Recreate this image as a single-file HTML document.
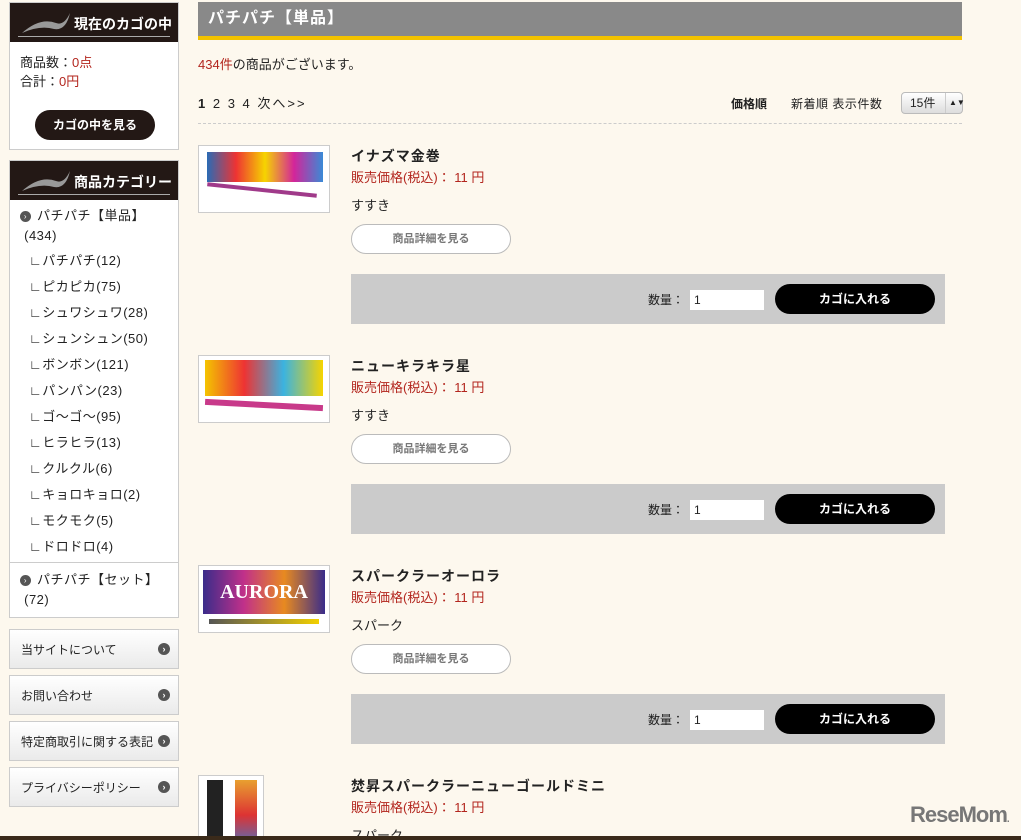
<!DOCTYPE html><html><head><meta charset="utf-8"><style>
html,body{margin:0;width:1021px;height:840px;overflow:hidden}
body{background:#fdf8ee;font-family:"Liberation Sans","Noto Sans CJK JP",sans-serif;font-size:13px;color:#222;position:relative}
.a{position:absolute}
.box{position:absolute;left:9px;width:168px;background:#fff;border:1px solid #ccc}
.hd{height:39px;background:#231815;color:#fff;font-weight:bold;font-size:14px;position:relative}
.hd span{position:absolute;left:64px;top:11px}
.hd i{position:absolute;left:8px;right:8px;top:33px;height:1px;background:#aaa}
.sw{position:absolute;left:10px;top:8px}
.red{color:#b3261e}
.cat{position:absolute;left:10px;font-size:13px;letter-spacing:.5px}
.nav{position:absolute;left:9px;width:168px;height:38px;border:1px solid #ccc;background:linear-gradient(#fff,#eaeaea);font-size:12px}
.nav span{position:absolute;left:11px;top:11px}
.arr{position:absolute;right:8px;top:13px;width:12px;height:12px;border-radius:50%;background:#555;color:#fff;font-size:9px;line-height:12px;text-align:center}
.dot{display:inline-block;width:11px;height:11px;border-radius:50%;background:#555;color:#fff;font-size:8px;line-height:11px;text-align:center;vertical-align:1px;margin-right:6px}
.img{position:absolute;left:198px;width:130px;height:66px;background:#fff;border:1px solid #ccc;overflow:hidden}
.t{position:absolute;left:351px;font-weight:bold;font-size:14px;letter-spacing:1px}
.p{position:absolute;left:351px;font-size:13px;color:#b3261e}
.d{position:absolute;left:351px;font-size:13px}
.db{position:absolute;left:351px;width:158px;height:28px;border:1px solid #bbb;border-radius:15px;background:#fff;color:#777;font-weight:bold;font-size:11px;text-align:center;line-height:28px}
.cart{position:absolute;left:351px;width:594px;height:50px;background:#cbcbcb}
.cart .q{position:absolute;left:297px;top:17px;font-size:12px}
.cart .in{position:absolute;left:339px;top:16px;width:74px;height:20px;background:#fff;font-size:12px;line-height:20px;text-indent:4px}
.cart .b{position:absolute;left:424px;top:10px;width:160px;height:30px;border-radius:15px;background:#000;color:#fff;font-weight:bold;font-size:12px;text-align:center;line-height:30px}
</style></head><body>
<div class="box" style="top:2px;height:146px">
<div class="hd"><svg class="sw" width="52" height="24"><path d="M2 22 Q20 6 36 12 Q44 15 50 2 Q46 20 34 18 Q20 14 2 22Z" fill="#999"/></svg><span>現在のカゴの中</span><i></i></div>
<div class="a" style="left:10px;top:50px;line-height:19px">商品数：<span class="red">0点</span><br>合計：<span class="red">0円</span></div>
<div class="a" style="left:25px;top:107px;width:120px;height:30px;border-radius:15px;background:#231815;color:#fff;font-weight:bold;font-size:12px;text-align:center;line-height:30px">カゴの中を見る</div>
</div>
<div class="box" style="top:160px;height:456px">
<div class="hd"><svg class="sw" width="52" height="24"><path d="M2 22 Q20 6 36 12 Q44 15 50 2 Q46 20 34 18 Q20 14 2 22Z" fill="#999"/></svg><span>商品カテゴリー</span><i></i></div>
<div class="cat" style="top:45px;line-height:20px"><span class="dot">›</span>パチパチ【単品】<br>&nbsp;(434)</div>
<div class="cat" style="left:19px;top:87px;line-height:26px">∟パチパチ(12)<br>∟ピカピカ(75)<br>∟シュワシュワ(28)<br>∟シュンシュン(50)<br>∟ボンボン(121)<br>∟パンパン(23)<br>∟ゴ～ゴ～(95)<br>∟ヒラヒラ(13)<br>∟クルクル(6)<br>∟キョロキョロ(2)<br>∟モクモク(5)<br>∟ドロドロ(4)</div>
<div class="a" style="left:0;right:0;top:401px;border-top:1px solid #ccc"></div>
<div class="cat" style="top:409px;line-height:20px"><span class="dot">›</span>パチパチ【セット】<br>&nbsp;(72)</div>
</div>
<div class="nav" style="top:629px"><span>当サイトについて</span><b class="arr">›</b></div>
<div class="nav" style="top:675px"><span>お問い合わせ</span><b class="arr">›</b></div>
<div class="nav" style="top:721px"><span>特定商取引に関する表記</span><b class="arr">›</b></div>
<div class="nav" style="top:767px"><span>プライバシーポリシー</span><b class="arr">›</b></div>

<div class="a" style="left:198px;top:2px;width:764px;height:34px;background:#898989;border-bottom:4px solid #f2c200;color:#fff;font-weight:bold;font-size:16px;line-height:34px;text-indent:10px;letter-spacing:1px">パチパチ【単品】</div>
<div class="a" style="left:198px;top:54px"><span class="red">434件</span>の商品がございます。</div>
<div class="a" style="left:198px;top:93px;letter-spacing:2px"><b>1</b> 2 3 4 次へ&gt;&gt;</div>
<div class="a" style="left:731px;top:95px;font-size:12px"><b>価格順</b></div>
<div class="a" style="left:791px;top:95px;font-size:12px;letter-spacing:.5px">新着順 表示件数</div>
<div class="a" style="left:901px;top:92px;width:60px;height:20px;border:1px solid #bbb;border-radius:4px;background:linear-gradient(#fff,#ddd);font-size:12px;line-height:20px;text-indent:8px">15件<span style="position:absolute;right:0;top:0;width:16px;border-left:1px solid #ccc;text-indent:3px;font-size:8px">▲▼</span></div>
<div class="a" style="left:198px;top:123px;width:764px;border-top:1px dashed #ccc"></div>

<div class="img" style="top:145px"><div class="a" style="left:8px;top:6px;width:116px;height:30px;background:linear-gradient(90deg,#2a6bb5,#e33,#f6d400,#d3259a,#3a8ad6)"></div><div class="a" style="left:8px;top:42px;width:110px;height:4px;background:#a03a8a;transform:rotate(6deg)"></div></div>
<div class="t" style="top:146px">イナズマ金巻</div><div class="p" style="top:167px">販売価格(税込)： 11 円</div><div class="d" style="top:195px">すすき</div>
<div class="db" style="top:224px">商品詳細を見る</div>
<div class="cart" style="top:274px"><span class="q">数量：</span><div class="in">1</div><div class="b">カゴに入れる</div></div>

<div class="img" style="top:355px"><div class="a" style="left:6px;top:4px;width:118px;height:36px;background:linear-gradient(90deg,#f4c400,#e33,#3bb3e0,#f6d400)"></div><div class="a" style="left:6px;top:46px;width:118px;height:6px;background:#c83a8a;transform:rotate(3deg)"></div></div>
<div class="t" style="top:356px">ニューキラキラ星</div><div class="p" style="top:377px">販売価格(税込)： 11 円</div><div class="d" style="top:405px">すすき</div>
<div class="db" style="top:434px">商品詳細を見る</div>
<div class="cart" style="top:484px"><span class="q">数量：</span><div class="in">1</div><div class="b">カゴに入れる</div></div>

<div class="img" style="top:565px"><div class="a" style="left:4px;top:4px;width:122px;height:44px;background:linear-gradient(90deg,#3a2c8a,#c0308a,#e88a20,#3a2c8a);color:#fff;font:bold 20px 'Liberation Serif',serif;text-align:center;line-height:44px">AURORA</div><div class="a" style="left:10px;top:53px;width:110px;height:5px;background:linear-gradient(90deg,#555,#f2d000)"></div></div>
<div class="t" style="top:566px">スパークラーオーロラ</div><div class="p" style="top:587px">販売価格(税込)： 11 円</div><div class="d" style="top:615px">スパーク</div>
<div class="db" style="top:644px">商品詳細を見る</div>
<div class="cart" style="top:694px"><span class="q">数量：</span><div class="in">1</div><div class="b">カゴに入れる</div></div>

<div class="img" style="top:775px;width:64px;height:70px"><div class="a" style="left:8px;top:4px;width:16px;height:70px;background:#222"></div><div class="a" style="left:36px;top:4px;width:22px;height:70px;background:linear-gradient(#e8a030,#d33,#3a7ad0)"></div></div>
<div class="t" style="top:776px">焚昇スパークラーニューゴールドミニ</div><div class="p" style="top:797px">販売価格(税込)： 11 円</div><div class="d" style="top:825px">スパーク</div>
<div class="a" style="left:910px;top:802px;font-weight:bold;font-size:22px;color:#777;letter-spacing:-1px">ReseMom<span style="font-size:10px">.</span></div>
<div class="a" style="left:0;top:836px;width:1021px;height:4px;background:#3a2a1a"></div>
</body></html>
